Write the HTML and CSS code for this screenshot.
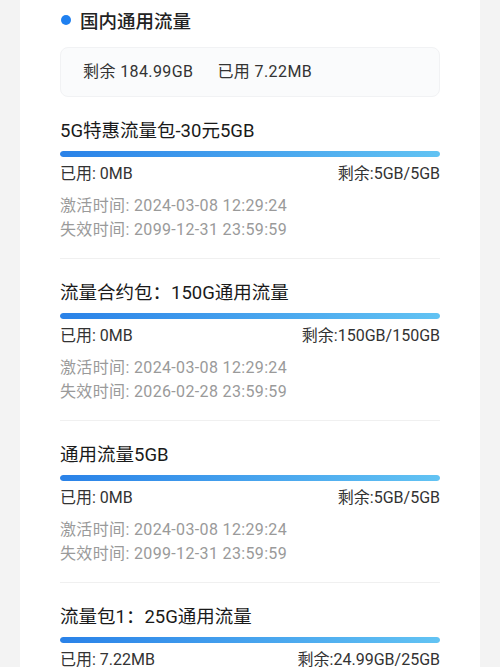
FILE: index.html
```html
<!DOCTYPE html>
<html lang="zh-CN">
<head>
    <meta charset="UTF-8">
    <meta name="viewport" content="width=device-width, initial-scale=1.0">
    <title>流量详情</title>
    <link rel="stylesheet" href="styles.css">
</head>
<body>
    <div class="card">
        <div class="section-title">
            <span class="dot"></span>
            <span>国内通用流量</span>
        </div>

        <div class="summary">
            <span>剩余 184.99GB</span>
            <span>已用 7.22MB</span>
        </div>

        <div class="package">
            <div class="pkg-name">5G特惠流量包-30元5GB</div>
            <div class="bar"><div class="bar-fill" style="width: 100%"></div></div>
            <div class="usage">
                <span>已用: 0MB</span>
                <span>剩余:5GB/5GB</span>
            </div>
            <div class="dates">
                <div>激活时间: 2024-03-08 12:29:24</div>
                <div>失效时间: 2099-12-31 23:59:59</div>
            </div>
        </div>

        <div class="package">
            <div class="pkg-name">流量合约包：150G通用流量</div>
            <div class="bar"><div class="bar-fill" style="width: 100%"></div></div>
            <div class="usage">
                <span>已用: 0MB</span>
                <span>剩余:150GB/150GB</span>
            </div>
            <div class="dates">
                <div>激活时间: 2024-03-08 12:29:24</div>
                <div>失效时间: 2026-02-28 23:59:59</div>
            </div>
        </div>

        <div class="package">
            <div class="pkg-name">通用流量5GB</div>
            <div class="bar"><div class="bar-fill" style="width: 100%"></div></div>
            <div class="usage">
                <span>已用: 0MB</span>
                <span>剩余:5GB/5GB</span>
            </div>
            <div class="dates">
                <div>激活时间: 2024-03-08 12:29:24</div>
                <div>失效时间: 2099-12-31 23:59:59</div>
            </div>
        </div>

        <div class="package">
            <div class="pkg-name">流量包1：25G通用流量</div>
            <div class="bar"><div class="bar-fill" style="width: 100%"></div></div>
            <div class="usage">
                <span>已用: 7.22MB</span>
                <span>剩余:24.99GB/25GB</span>
            </div>
            <div class="dates">
                <div>激活时间: 2024-03-08 12:29:24</div>
                <div>失效时间: 2099-12-31 23:59:59</div>
            </div>
        </div>
    </div>
</body>
</html>
```

FILE: styles.css
```css
/* Page base */
body {
    margin: 0;
    background-color: #f3f3f3;
    font-family: Roboto, "Noto Sans CJK SC", sans-serif;
    color: #222;
}

.card {
    margin: 0 20px;
    padding: 0 40px;
    background-color: #fff;
    min-height: 700px;
}

/* Section header with blue dot */
.section-title {
    display: flex;
    align-items: center;
    gap: 9px;
    padding-top: 6px;
    height: 28px;
    font-size: 18.5px;
    font-weight: 500;
    color: #222;
}

.dot {
    width: 10px;
    height: 10px;
    border-radius: 50%;
    background-color: #1f80f0;
    margin-left: 1px;
}

/* Summary box */
.summary {
    margin-top: 13px;
    padding: 12px 22px;
    line-height: 24px;
    font-size: 16px;
    letter-spacing: 0.4px;
    color: #333;
    background-color: #fafbfc;
    border: 1px solid #f1f2f4;
    border-radius: 8px;
    display: flex;
    gap: 24px;
}

/* Package rows */
.package {
    padding: 21px 0 16px;
    border-bottom: 1px solid #f0f0f0;
}

.pkg-name {
    font-size: 18.5px;
    line-height: 26px;
    color: #1a1a1a;
}

.bar {
    margin-top: 7px;
    height: 6px;
    border-radius: 3px;
    background-color: #e8eef6;
    overflow: hidden;
}

.bar-fill {
    height: 100%;
    border-radius: 3px;
    background: linear-gradient(to right, #2a82e8, #62c3f3);
}

.usage {
    margin-top: 5px;
    display: flex;
    justify-content: space-between;
    font-size: 16px;
    line-height: 24px;
    color: #333;
}

.dates {
    margin-top: 8px;
    font-size: 16px;
    line-height: 24px;
    letter-spacing: 0.35px;
    color: #9a9a9a;
}
```
